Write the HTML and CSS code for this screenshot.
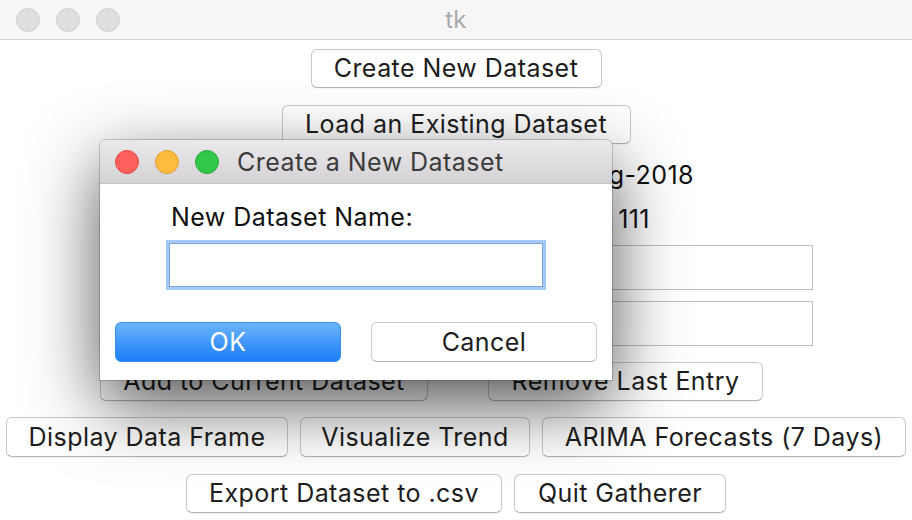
FILE: index.html
```html
<!DOCTYPE html>
<html>
<head>
<meta charset="utf-8">
<title>tk</title>
<link rel="stylesheet" href="styles.css">
</head>
<body>
<div class="window">
  <div class="titlebar">
    <div class="lights">
      <span class="light grey"></span>
      <span class="light grey"></span>
      <span class="light grey"></span>
    </div>
    <div class="title">tk</div>
  </div>
  <div class="content">
    <div class="row r-create"><button class="btn w-create">Create New Dataset</button></div>
    <div class="row r-load"><button class="btn w-load">Load an Existing Dataset</button></div>
    <div class="row r-label1"><span class="label">Today: 14-Aug-2018</span></div>
    <div class="row r-label2"><span class="label">Entries: 111</span></div>
    <div class="row r-entry1"><div class="entry"></div></div>
    <div class="row r-entry2"><div class="entry"></div></div>
    <div class="row r-add">
      <button class="btn w-add">Add to Current Dataset</button>
      <button class="btn w-remove">Remove Last Entry</button>
    </div>
    <div class="row r-three">
      <button class="btn w-display">Display Data Frame</button>
      <button class="btn w-visual">Visualize Trend</button>
      <button class="btn w-arima">ARIMA Forecasts (7 Days)</button>
    </div>
    <div class="row r-two">
      <button class="btn w-export">Export Dataset to .csv</button>
      <button class="btn w-quit">Quit Gatherer</button>
    </div>
  </div>

  <div class="dialog">
    <div class="d-titlebar">
      <div class="lights d-lights">
        <span class="light red"></span>
        <span class="light yellow"></span>
        <span class="light green"></span>
      </div>
      <div class="d-title">Create a New Dataset</div>
    </div>
    <div class="d-body">
      <div class="d-label">New Dataset Name:</div>
      <div class="d-entry-wrap"><div class="d-entry"></div></div>
      <div class="d-buttons">
        <button class="dbtn ok">OK</button>
        <button class="dbtn cancel">Cancel</button>
      </div>
    </div>
  </div>
</div>
</body>
</html>
```
FILE: styles.css
```css
* { box-sizing: border-box; }
html, body {
  margin: 0;
  padding: 0;
  width: 912px;
  height: 520px;
  overflow: hidden;
  background: #ffffff;
  font-family: "Inter", "Liberation Sans", sans-serif;
}
.window {
  position: relative;
  width: 912px;
  height: 520px;
  background: #ffffff;
}
.titlebar {
  height: 40px;
  background: #f6f6f6;
  border-bottom: 1px solid #d2d2d2;
  display: flex;
  align-items: center;
  position: relative;
}
.lights {
  display: flex;
  gap: 16px;
  padding-left: 16px;
}
.light {
  width: 24px;
  height: 24px;
  border-radius: 50%;
  display: block;
}
.light.grey { background: #dedede; border: 1px solid #cecece; }
.light.red { background: #fc605c; border: 1px solid #df4a44; }
.light.yellow { background: #fdbc40; border: 1px solid #de9f34; }
.light.green { background: #34c84a; border: 1px solid #27a93a; }
.title {
  position: absolute;
  left: 0; right: 0;
  text-align: center;
  color: #a9a9a9;
  font-size: 24px;
  top: 5px;
  letter-spacing: 0.3px;
}
.content {
  display: flex;
  flex-direction: column;
}
.row {
  display: flex;
  justify-content: center;
}
.btn {
  font-family: inherit;
  font-size: 25px;
  letter-spacing: 0.45px;
  color: #1d1d1d;
  background: #ffffff;
  border: 1px solid #c8c8c8;
  border-bottom-color: #b4b4b4;
  border-radius: 6px;
  height: 39px;
  padding: 0;
  margin: 0;
  line-height: 1;
  box-shadow: 0 1px 1px rgba(0,0,0,0.05);
}
.r-create { margin-top: 9px; }
.w-create { width: 291px; }
.r-load { margin-top: 17px; }
.w-load { width: 349px; }
.r-label1 { height: 42px; margin-top: 10px; justify-content: flex-end; padding-right: 218px; align-items: center; }
.r-label2 { height: 42px; margin-top: 2px; justify-content: flex-end; padding-right: 262px; align-items: center; }
.label { font-size: 25px; letter-spacing: 0.45px; color: #111; }
.r-entry1 { margin-top: 5px; justify-content: flex-end; padding-right: 99px; }
.r-entry2 { margin-top: 11px; justify-content: flex-end; padding-right: 99px; }
.entry {
  width: 376px;
  height: 45px;
  border: 1px solid #bdbdbd;
  background: #fff;
}
.r-add { margin-top: 16px; gap: 60px; justify-content: flex-start; padding-left: 100px; }
.w-add { width: 328px; }
.w-remove { width: 275px; }
.r-three { margin-top: 16px; gap: 12px; justify-content: flex-start; padding-left: 6px; }
.r-three .btn { height: 40px; }
.w-display { width: 282px; }
.w-visual { width: 230px; }
.w-arima { width: 364px; }
.r-two { margin-top: 17px; gap: 12px; justify-content: flex-start; padding-left: 186px; }
.r-two .btn { height: 39px; }
.w-export { width: 316px; }
.w-quit { width: 212px; }

/* Dialog overlay */
.dialog {
  position: absolute;
  left: 100px;
  top: 140px;
  width: 512px;
  height: 240px;
  border-radius: 6px 6px 0 0;
  background: #ffffff;
  box-shadow: 0 0 0 1px rgba(0,0,0,0.18), 0 24px 70px rgba(0,0,0,0.68);
  overflow: hidden;
  display: flex;
  flex-direction: column;
}
.d-titlebar {
  height: 44px;
  background: linear-gradient(#ebe9eb, #d4d2d4);
  border-bottom: 1px solid #c3c3c3;
  display: flex;
  align-items: center;
}
.d-lights { padding-left: 15px; }
.d-title {
  margin-left: 18px;
  font-size: 25px;
  letter-spacing: 0.45px;
  color: #3c3b3c;
}
.d-body {
  flex: 1;
  display: flex;
  flex-direction: column;
}
.d-label {
  margin-top: 18px;
  padding-left: 71px;
  font-size: 25px;
  letter-spacing: 0.45px;
  color: #111;
  line-height: 30px;
}
.d-entry-wrap {
  margin-top: 8px;
  margin-left: 66px;
  width: 380px;
  height: 50px;
  border: 3px solid #a5c9f5;
  padding: 0;
}
.d-entry {
  width: 100%;
  height: 100%;
  border: 1px solid #7ea8d9;
  background: #fff;
}
.d-buttons {
  margin-top: 32px;
  display: flex;
  gap: 30px;
  padding-left: 15px;
}
.dbtn {
  width: 226px;
  height: 40px;
  border-radius: 6px;
  font-family: inherit;
  font-size: 25px;
  letter-spacing: 0.45px;
  padding: 0;
  margin: 0;
  line-height: 1;
}
.dbtn.ok {
  color: #ffffff;
  background: linear-gradient(#6bb4fb, #1a7df8);
  border: 1px solid #3d8ff2;
}
.dbtn.cancel {
  color: #1d1d1d;
  background: #ffffff;
  border: 1px solid #cacaca;
  border-bottom-color: #b5b5b5;
}
```
